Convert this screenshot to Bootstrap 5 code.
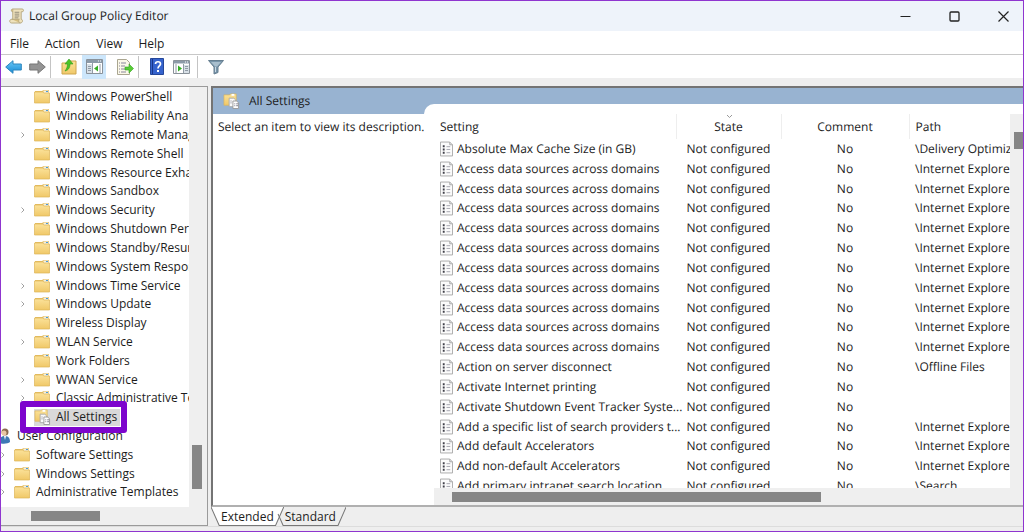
<!DOCTYPE html>
<html lang="en">
<head>
<meta charset="utf-8">
<meta name="viewport" content="width=device-width, initial-scale=1">
<title>Local Group Policy Editor</title>
<link href="https://cdn.jsdelivr.net/npm/bootstrap@5.3.0/dist/css/bootstrap.min.css" rel="stylesheet">
<style>
  body { font: 12px/18px "Open Sans", "Noto Sans", sans-serif; color: #1c1c1c; background: #eeeeee; text-rendering: geometricPrecision; }
  button { font: inherit; color: inherit; background: none; border: 0; padding: 0; }
  svg { flex: none; display: block; }
  .app-window { height: 100vh; border: 1px solid #8f35cf; }
  .title-bar { height: 30px; background: #eef3fa; gap: 9px; }
  .app-title { margin-left: -4px; }
  .caption-btn { width: 40px; height: 28px; display: grid; place-items: center; }
  .menu-bar { height: 24px; background: #fff; border-bottom: 1px solid #c8c8c8; gap: 16px; padding: 2px 0 0 9px; }
  .tool-bar { height: 23px; background: #fff; }
  .tool-btn { width: 24px; height: 24px; display: grid; place-items: center; }
  .tool-btn.pressed { background: #cce6fb; margin: 0 7px 0 1px; }
  .tool-sep { width: 1px; height: 22px; background: #c4c4c4; margin: 0 6px 0 1px; }
  .tree-pane { width: 207px; border: 1px solid #9a9a9a; border-left: 0; margin-right: 3px; }
  .tree-view { background: #fff; padding: 1px 0 5px; }
  .tree-row { line-height: 16px; white-space: nowrap; }
  .tree-row button { height: 17px; }
  .tree-row.lvl-deep { padding-left: 17px; }
  .tree-row.lvl-root { margin-left: -6px; }
  .tree-row.lvl-sub { margin-left: -3px; }
  .chev { width: 10px; margin-right: 6px; flex: none; }
  .label-text { padding-left: 6px; }
  .picked button { background: #d9d9d9; padding-right: 3px; }
  .picked .label-text { padding-left: 5px; }
  .callout-box { position: absolute; inset: -7px auto -6px 19px; width: 107px; border: 6px solid #7d05cd; border-radius: 3px; z-index: 2; }
  .track { background: #efefef; flex: none; }
  .thumb { background: #868686; }
  .track-tree { width: 18px; padding-left: 3px; }
  .track-tree .thumb { width: 10px; height: 44px; margin-bottom: 18px; }
  .track-tree-x { height: 18px; padding: 4px 0 0 30px; }
  .track-tree-x .thumb { width: 69px; height: 10px; }
  .detail-pane { border: 1px solid #747474; border-width: 2px 0 2px 2px; border-bottom-color: #b0b0b0; background: #fff; }
  .detail-head { height: 26px; background: #98b3d1; padding-left: 10px; gap: 9px; }
  .description { width: 221px; padding: 4px 5px; white-space: nowrap; }
  .list-side { margin: -10px 0 0 -10px; padding: 10px 0 0 10px; background: #fff; border-top-left-radius: 10px; }
  .settings-table { table-layout: fixed; width: 100%; height: calc(100% + 8px); line-height: 16px; }
  .settings-table th { font-weight: 400; height: 25px; padding: 0; border-right: 1px solid #eeeeee; position: relative; }
  .settings-table th:last-child { border: 0; }
  .settings-table td { padding: 0; white-space: nowrap; }
  .settings-table th:first-child, .settings-table td:first-child { padding-left: 6px; }
  .settings-table th:last-child, .settings-table td:last-child { padding-left: 6px; }
  .sort-mark { position: absolute; top: 1px; left: 50%; margin-left: -3px; }
  .setting-name { display: flex; align-items: center; gap: 4px; }
  .track-list { width: 13px; padding: 18px 0 0 4px; }
  .track-list .thumb { height: 17px; }
  .track-list-x { height: 17px; padding: 4px 189px 0 18px; }
  .track-list-x .thumb { height: 10px; }
  .view-tab { position: relative; height: 19px; margin-right: -9px; padding: 0 10px; }
  .view-tab svg { position: absolute; inset: 0; width: 100%; height: 100%; }
  .view-tab span { position: relative; }
  .status-line { height: 5px; border-top: 1px solid #dcdcdc; }
</style>
</head>
<body>
<svg width="0" height="0" class="position-absolute" aria-hidden="true">
  <defs>
    <linearGradient id="gold" x1="0" y1="0" x2="0" y2="1"><stop offset="0" stop-color="#fbe29a"/><stop offset="1" stop-color="#f0c868"/></linearGradient>
    <linearGradient id="sky" x1="0" y1="0" x2="0" y2="1"><stop offset="0" stop-color="#6cc9f7"/><stop offset="1" stop-color="#168ad4"/></linearGradient>
  </defs>
  <symbol id="folder" viewBox="0 0 16 16">
    <path d="M1 2h7l1.500-1h5.500v13H1z" fill="#e5bd62"/><path d="M9.500 1.500h5v3h-5z" fill="#f4f0df"/><path d="M12 2h2v1h-2z" fill="#4b9ad8"/>
    <path d="M.5 3h8l1.500 1h5.500v10H.5z" fill="url(#gold)" stroke="#dcb458" stroke-width=".7"/>
  </symbol>
  <symbol id="all" viewBox="0 0 18 17">
    <path d="M1 2h6l1-1h6v12H1z" fill="url(#gold)" stroke="#dcb458" stroke-width=".7"/><path d="M9 1h3v2H9z" fill="#fff"/>
    <path d="M6.500 5.500h5l2 2v7h-7z" fill="#fafafa" stroke="#aaa"/><path d="M10.500 8.500h4l2 2v6h-6z" fill="#fff" stroke="#9a9a9a"/>
    <path d="M12 11.500h1m1 0h2m-4 2h1m1 0h2M8 8.500h1m-1 2h1" stroke="#778"/>
  </symbol>
  <symbol id="policy" viewBox="0 0 14 16">
    <path d="M.5.5h10l3 3v12H.5z" fill="#fbfbfb" stroke="#a8a8a8"/><path d="M10.500.5v3h3" fill="#ddd" stroke="#a8a8a8"/>
    <path d="M3 4h2v2H3zm0 3.500h2v2H3zM3 11h2v2H3z" fill="#3f3f48"/><path d="M7 5.500h4m-4 3h4m-4 3.500h4" stroke="#a3a3ad"/>
  </symbol>
  <symbol id="user" viewBox="0 0 16 16">
    <circle cx="10" cy="4" r="3.500" fill="#8c6b4f"/><circle cx="9" cy="5" r="2.500" fill="#e9c7a4"/>
    <path d="M4 15c0-5 2-7 6-7s5 3 5 6c-2 2-8 2-11 1z" fill="#3d78b5"/><path d="m9 8 2 0-1 4z" fill="#fff"/>
  </symbol>
  <symbol id="chevron" viewBox="0 0 10 10"><path d="m3.500 2.500 2.500 2.500-2.500 2.500" fill="none" stroke="#a0a0a0"/></symbol>
</svg>

<div class="app-window d-flex flex-column overflow-hidden">
  <header class="title-bar d-flex align-items-center flex-shrink-0">
    <svg class="ms-2" width="15" height="16" viewBox="0 0 16 17" aria-hidden="true"><path d="M4 1h10c2 0 2 3 0 3h-1v8c2 0 2 4-1 4H3c-3 0-3-4 0-4h1z" fill="#eee2bd" stroke="#b5a67e"/><path d="M4 1c-2 0-2 3 0 3m8 12c-2 0-2-4-1-4H3" fill="#d4bd7e" stroke="#b5a67e"/><path d="M6 4.500h5m-5 2h5m-5 2h5m-5 2h4" stroke="#8d8876"/></svg>
    <span class="app-title flex-fill">Local Group Policy Editor</span>
    <button class="caption-btn" aria-label="Minimize"><svg width="11" height="11" viewBox="0 0 11 11"><path d="M.5 5.500h10" stroke="#222"/></svg></button>
    <button class="caption-btn" aria-label="Maximize"><svg width="11" height="11" viewBox="0 0 11 11"><rect x="1" y="1" width="9" height="9" rx="1" fill="none" stroke="#222" stroke-width="1.300"/></svg></button>
    <button class="caption-btn" aria-label="Close"><svg width="11" height="11" viewBox="0 0 11 11"><path d="m.5.5 10 10m0-10-10 10" stroke="#222" stroke-width="1.200"/></svg></button>
  </header>
  <nav class="menu-bar d-flex align-items-center flex-shrink-0" aria-label="Menu">
    <button>File</button><button>Action</button><button>View</button><button>Help</button>
  </nav>
  <div class="tool-bar d-flex align-items-center flex-shrink-0" role="toolbar" aria-label="Tools">
    <button class="tool-btn" aria-label="Back"><svg width="17" height="14" viewBox="0 0 17 14"><path d="M.7 7 8 .7v3.300h8.300v6H8v3.300z" fill="url(#sky)" stroke="#2c85bd"/></svg></button>
    <button class="tool-btn" aria-label="Forward"><svg width="17" height="14" viewBox="0 0 17 14"><path d="M16.300 7 9 .7v3.300H.7v6H9v3.300z" fill="#949494" stroke="#777"/></svg></button>
    <span class="tool-sep"></span>
    <button class="tool-btn" aria-label="Up one level"><svg width="16" height="17" viewBox="0 0 16 17"><path d="M1 5h5l2-2h7v13H1z" fill="url(#gold)" stroke="#cfa64f"/><path d="M4 13c4-1 5-4 5-7h3L8 1 4 6h2.500c0 3-1 5-2.500 7z" fill="#4cc427" stroke="#2f9a1d" stroke-width=".6"/></svg></button>
    <button class="tool-btn pressed" aria-label="Show or hide console tree" aria-pressed="true"><svg width="17" height="15" viewBox="0 0 17 15"><path d="M.5.5h16v14H.5z" fill="#fff" stroke="#8a929a"/><path d="M1 1h15v3H1z" fill="#8c9aa8"/><path d="M12 2h1m1 0h1" stroke="#fff"/><path d="M1 5h5v9H1z" fill="#d8e0e7"/><path d="M6.500 4v10M2 7.500h3m-3 2h3m-3 2h3M14 5v9" stroke="#909ba5"/><path d="M12 6.500v6L8 9.500z" fill="#35ad23"/></svg></button>
    <button class="tool-btn" aria-label="Export list"><svg width="17" height="16" viewBox="0 0 17 16"><path d="M.5.5h9l3 3v12H.5z" fill="#fbf8e8" stroke="#aaa690"/><path d="M2 4h1m1 0h5M2 7h1m1 0h4M2 10h1m1 0h4M2 13h1m1 0h5" stroke="#89869a"/><path d="M8 8h4V5l4.500 4.500L12 14v-3H8z" fill="#58cb35" stroke="#33a51f" stroke-width=".6"/></svg></button>
    <span class="tool-sep"></span>
    <button class="tool-btn" aria-label="Help"><svg width="14" height="17" viewBox="0 0 14 17"><path d="M.5.5h13v16H.5z" fill="#3563cd" stroke="#254799"/><path d="M2.500 1v15" stroke="#18368a"/><path d="M5.500 6c0-3 5-3 5 0 0 2-2.500 2-2.500 4.500" fill="none" stroke="#fff" stroke-width="1.700"/><path d="M7 12h2v2H7z" fill="#fff"/></svg></button>
    <button class="tool-btn" aria-label="Show or hide action pane"><svg width="17" height="14" viewBox="0 0 17 14"><path d="M.5.5h16v13H.5z" fill="#fff" stroke="#8a929a"/><path d="M1 1h15v2.500H1z" fill="#8c9aa8"/><path d="M12 2h1m1 0h1" stroke="#fff"/><path d="M11 5h5v8h-5z" fill="#d8e0e7"/><path d="M10.500 4v9M12 6.500h3m-3 2h3m-3 2h3M3 4v9" stroke="#909ba5"/><path d="M5 5.500v6l4-3z" fill="#35ad23"/></svg></button>
    <span class="tool-sep ms-1"></span>
    <button class="tool-btn" aria-label="Filter"><svg width="16" height="16" viewBox="0 0 16 16"><path d="M.5 1.500h15L10 8v5.500L6 15V8z" fill="#7895aa" stroke="#667f91"/><path d="M3 3h10L9 7.500H7z" fill="#a9bfce"/><path d="M7.500 8v5" stroke="#cbdbe5"/></svg></button>
  </div>

  <main class="d-flex flex-fill pt-2 overflow-hidden" style="min-height:0">
    <section class="tree-pane d-flex flex-column flex-shrink-0" aria-label="Console tree">
      <div class="d-flex flex-fill overflow-hidden">
        <ul id="tree" class="tree-view list-unstyled mb-0 flex-fill d-flex flex-column overflow-hidden"></ul>
        <div class="track track-tree d-flex align-items-end"><div class="thumb"></div></div>
      </div>
      <div class="track track-tree-x"><div class="thumb"></div></div>
    </section>

    <div class="d-flex flex-column flex-fill overflow-hidden">
      <section class="detail-pane d-flex flex-column flex-fill overflow-hidden">
        <div class="detail-head d-flex align-items-center flex-shrink-0"><svg width="17" height="16"><use href="#all"/></svg><span>All Settings</span></div>
        <div class="d-flex flex-fill" style="min-height:0">
          <div class="description flex-shrink-0">Select an item to view its description.</div>
          <div class="list-side d-flex flex-fill" style="min-width:0">
            <div class="d-flex flex-column flex-fill overflow-hidden">
              <div class="flex-fill overflow-hidden" style="min-height:0">
                <table class="settings-table">
                  <colgroup><col style="width:242px"><col style="width:105px"><col style="width:128px"><col></colgroup>
                  <thead><tr><th>Setting</th><th class="text-center"><svg class="sort-mark" width="7" height="4" viewBox="0 0 7 4"><path d="m1 0 2.500 2.500L6 0" fill="none" stroke="#999"/></svg>State</th><th class="text-center">Comment</th><th>Path</th></tr></thead>
                  <tbody id="settings"></tbody>
                </table>
              </div>
              <div class="track track-list-x"><div class="thumb"></div></div>
            </div>
            <div class="track track-list"><div class="thumb"></div></div>
          </div>
        </div>
      </section>
      <div class="d-flex flex-shrink-0" role="tablist">
        <button class="view-tab" role="tab" aria-selected="true"><svg viewBox="0 0 71 19" preserveAspectRatio="none"><path d="M0 0 8 18.500H63L71 0" fill="#fff" stroke="#777"/></svg><span>Extended</span></button>
        <button class="view-tab" role="tab" aria-selected="false"><svg viewBox="0 0 70 19" preserveAspectRatio="none"><path d="M3 7 8 18.500H62L70 0" fill="none" stroke="#777"/></svg><span>Standard</span></button>
      </div>
    </div>
  </main>
  <footer class="status-line flex-shrink-0"></footer>
</div>

<script>
  // Tree entries: level, label, whether the node can be expanded
  const tree = [
    ["deep", "Windows PowerShell"], ["deep", "Windows Reliability Ana"], ["deep", "Windows Remote Manag", 1],
    ["deep", "Windows Remote Shell"], ["deep", "Windows Resource Exha"], ["deep", "Windows Sandbox"],
    ["deep", "Windows Security", 1], ["deep", "Windows Shutdown Perf"], ["deep", "Windows Standby/Resur"],
    ["deep", "Windows System Respor"], ["deep", "Windows Time Service", 1], ["deep", "Windows Update", 1],
    ["deep", "Wireless Display"], ["deep", "WLAN Service", 1], ["deep", "Work Folders"], ["deep", "WWAN Service", 1],
    ["deep", "Classic Administrative Te", 1], ["deep", "All Settings"], ["root", "User Configuration"],
    ["sub", "Software Settings", 1], ["sub", "Windows Settings", 1], ["sub", "Administrative Templates", 1]
  ];
  const chevron = '<svg width="10" height="10"><use href="#chevron"/></svg>';
  document.getElementById("tree").innerHTML = tree.map(([level, label, open]) => {
    const picked = label === "All Settings";
    const icon = picked ? "all" : level === "root" ? "user" : "folder";
    return `<li class="tree-row lvl-${level} position-relative d-flex align-items-center flex-fill${picked ? " picked" : ""}">
      ${level === "root" ? "" : `<span class="chev">${open ? chevron : ""}</span>`}
      <button class="d-flex align-items-center flex-shrink-0"><svg width="${picked ? 17 : 16}" height="16"><use href="#${icon}"/></svg><span class="label-text">${label}</span></button>
      ${picked ? '<span class="callout-box"></span>' : ""}</li>`;
  }).join("");

  const ie = "\\Internet Explorer";
  const settings = [
    ["Absolute Max Cache Size (in GB)", "\\Delivery Optimiz"],
    ...Array.from({ length: 10 }, () => ["Access data sources across domains", ie]),
    ["Action on server disconnect", "\\Offline Files"], ["Activate Internet printing", ""],
    ["Activate Shutdown Event Tracker Syste...", ""], ["Add a specific list of search providers t...", ie],
    ["Add default Accelerators", ie], ["Add non-default Accelerators", ie], ["Add primary intranet search location", "\\Search"]
  ];
  document.getElementById("settings").innerHTML = settings.map(([name, path]) =>
    `<tr><td><div class="setting-name"><svg width="13" height="16"><use href="#policy"/></svg><span>${name}</span></div></td>
     <td class="text-center">Not configured</td><td class="text-center">No</td><td>${path}</td></tr>`).join("");
</script>
<script src="https://cdn.jsdelivr.net/npm/bootstrap@5.3.0/dist/js/bootstrap.bundle.min.js"></script>
</body>
</html>
